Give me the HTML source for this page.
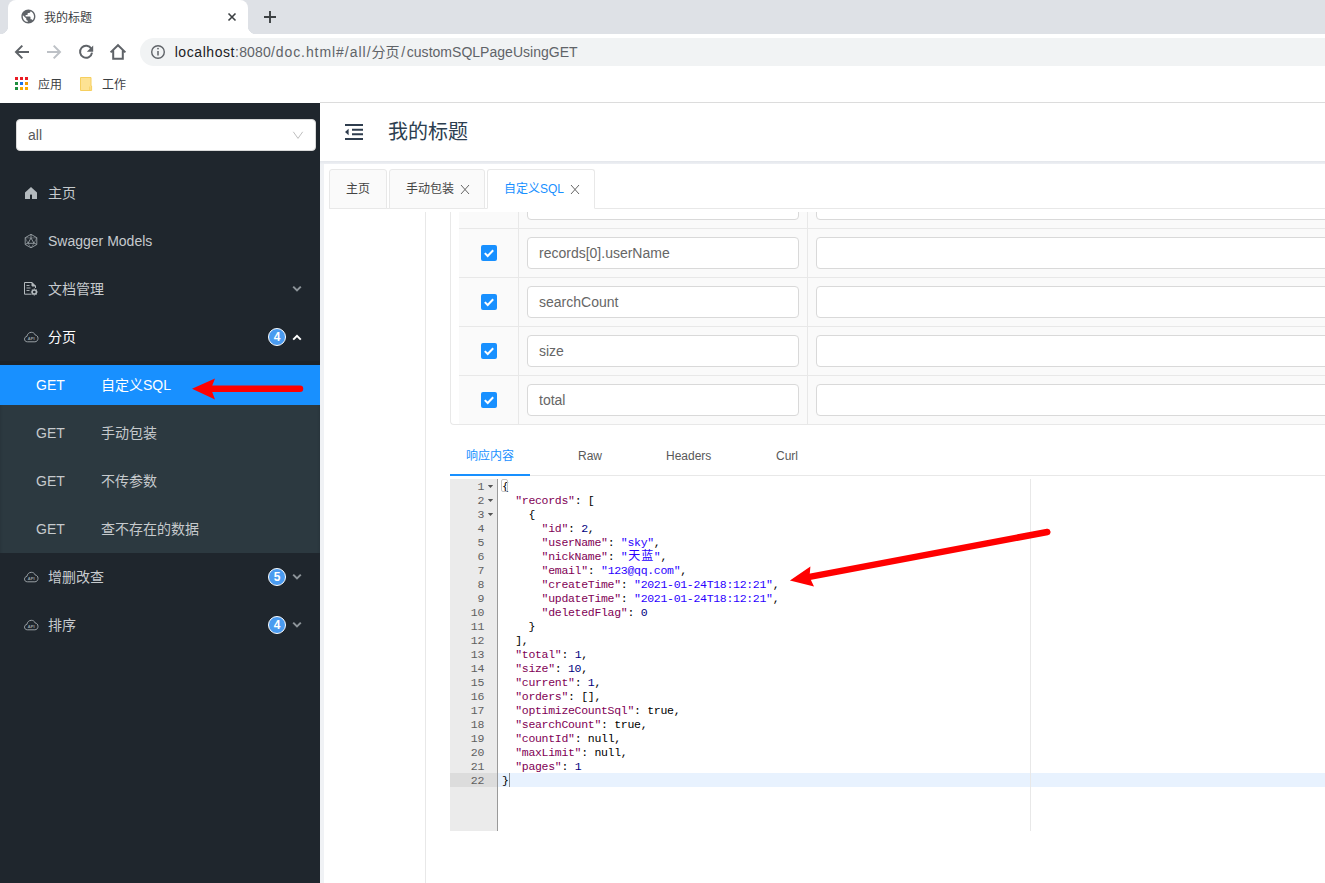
<!DOCTYPE html>
<html lang="zh-CN">
<head>
<meta charset="utf-8">
<title>我的标题</title>
<style>
*{box-sizing:border-box;margin:0;padding:0}
html,body{width:1325px;height:883px;overflow:hidden;background:#fff}
body{position:relative;font-family:"Liberation Sans","Noto Sans CJK SC",sans-serif;color:#333}
.abs{position:absolute}
svg{position:absolute;overflow:visible}
/* ---------- browser chrome ---------- */
#tabstrip{left:0;top:0;width:1325px;height:34px;background:#dee1e6}
#tab{left:8px;top:0;width:240px;height:34px;background:#fff;border-radius:8px 8px 0 0}
#tab:before,#tab:after{content:"";position:absolute;bottom:0;width:8px;height:8px;background:radial-gradient(circle at 0 0,transparent 8px,#fff 8.5px)}
#tab:before{left:-8px}
#tab:after{right:-8px;transform:scaleX(-1)}
#tabtitle{left:44px;top:11px;font-size:12px;line-height:14px;color:#3c4043;white-space:nowrap}
#toolbar{left:0;top:34px;width:1325px;height:34px;background:#fff}
#omni{left:140px;top:38px;width:1200px;height:28px;border-radius:14px;background:#f1f3f4}
#url{left:174px;top:44px;font-size:14px;line-height:17px;color:#5f6368;white-space:nowrap;letter-spacing:.4px}
#url b{font-weight:400;color:#202124}
#bookbar{left:0;top:68px;width:1325px;height:35px;background:#fff}
.bm{font-size:12px;line-height:14px;color:#3c4043;white-space:nowrap}
/* ---------- sidebar ---------- */
#side{left:0;top:103px;width:320px;height:780px;background:#1f262d}
#sel{left:16px;top:119px;width:300px;height:32px;background:#fff;border-radius:4px;border:1px solid #d9d9d9}
#sel span{position:absolute;left:11px;top:7px;font-size:14px;line-height:16px;color:#595959}
.mi{left:48px;font-size:14px;line-height:16px;color:#c6cacd;white-space:nowrap}
.mi.on{color:#fff}
#sub{left:0;top:361px;width:320px;height:192px;background:#2c3940;box-shadow:inset 0 4px 4px -2px rgba(0,0,0,.45)}
#subtop{left:0;top:361px;width:320px;height:4px;background:#1c2228}
#act{left:0;top:365px;width:320px;height:40px;background:#1890ff}
.get{left:36px;font-size:14px;line-height:16px;color:#c6cacd}
.sn{left:101px;font-size:14px;line-height:16px;color:#c6cacd;white-space:nowrap}
.badge{width:18px;height:18px;border-radius:9px;background:#4a9bf0;border:1px solid #fff;color:#fff;font-size:12px;font-weight:700;line-height:16px;text-align:center;left:268px}
/* ---------- main ---------- */
#mainbg{left:320px;top:103px;width:1005px;height:780px;background:#f0f2f5}
#hdr{left:320px;top:103px;width:1005px;height:58px;background:#fff}
#band{left:320px;top:161px;width:1005px;height:3px;background:linear-gradient(#e3e6eb,#eef0f4)}
#card{left:324px;top:164px;width:1001px;height:719px;background:#fff}
#ttl{left:388px;top:120px;font-size:20px;line-height:24px;color:#2c3e50;white-space:nowrap}
.tb{top:169px;height:40px;border:1px solid #e8e8e8;border-radius:3px 3px 0 0;background:#fafafa;font-size:12px;line-height:38px;color:#444;white-space:nowrap}
.tb span{position:absolute;top:0}
#tbline{left:329px;top:208px;width:996px;height:1px;background:#e8e8e8}
/* table */
#tbl{left:450px;top:212px;width:875px;height:213px;background:#fff;border-left:1px solid #e8e8e8;border-bottom:1px solid #e8e8e8;border-radius:0 0 0 4px}
#tbg{left:459px;top:212px;width:866px;height:212px;background:#fafafa}
#vline{left:425px;top:212px;width:1px;height:671px;background:#e8e8e8}
.hl{left:459px;width:866px;height:1px;background:#e8e8e8}
.vl{width:1px;top:212px;height:212px;background:#e8e8e8}
.inp{height:32px;background:#fff;border:1px solid #d9d9d9;border-radius:4px;font-size:14px;line-height:30px;color:#666;padding-left:11px;white-space:nowrap}
.cb{left:481px;width:16px;height:16px;background:#1890ff;border-radius:2px}
/* response tabs */
.rt{top:449px;font-size:12px;line-height:14px;color:#595959;white-space:nowrap}
/* code */
#gut{left:450px;top:479px;width:47px;height:352px;background:#ebebeb}
#gutb{left:497px;top:479px;width:1px;height:352px;background:#9a9a9a}
#code{left:450px;top:479.5px;width:875px;font-family:"Liberation Mono","Noto Sans CJK SC",monospace;font-size:11.5px;letter-spacing:-.3px;line-height:14px;color:#000}
.ln{position:relative;height:14px;white-space:pre}
.ln i{position:absolute;left:0;top:0;width:34px;text-align:right;font-style:normal;color:#606060}
.ln u{position:absolute;left:52px;top:0;text-decoration:none}
.k{color:#7f0055}.s{color:#2a00ff}.n{color:#000080}
.cj{display:inline-block;width:13.2px;text-align:center;font-size:12px;line-height:14px;vertical-align:top}
.ln b{position:absolute;left:37.8px;top:5.5px;width:5.4px;height:3px;background:#555;clip-path:polygon(0 0,100% 0,50% 100%)}
</style>
</head>
<body>
<!-- browser chrome -->
<div class="abs" id="tabstrip"></div>
<div class="abs" id="tab"></div>
<div class="abs" id="tabtitle">我的标题</div>
<div class="abs" id="toolbar"></div>
<div class="abs" id="omni"></div>
<div class="abs" id="url" style="left:0"><span class="abs" style="left:174.7px;top:0;letter-spacing:0.57px;color:#202124">localhost</span><span class="abs" style="left:235.1px;top:0;letter-spacing:0.17px">:8080</span><span class="abs" style="left:271px;top:0;letter-spacing:0.91px">/doc.html</span><span class="abs" style="left:336px;top:0;letter-spacing:0.99px">#/all/</span><span class="abs" style="left:371.5px;top:0;letter-spacing:0px">分页</span><span class="abs" style="left:401.2px;top:0;letter-spacing:0px">/</span><span class="abs" style="left:406.8px;top:0;letter-spacing:0.02px">customSQLPageUsingGET</span></div>
<div class="abs" id="bookbar"></div>
<div class="abs bm" style="left:38px;top:78px">应用</div>
<div class="abs bm" style="left:102px;top:78px">工作</div>

<svg style="left:19.6px;top:8.4px" width="16.8" height="16.8" viewBox="0 0 24 24"><path fill="#5f6368" d="M12 2C6.48 2 2 6.48 2 12s4.48 10 10 10 10-4.48 10-10S17.52 2 12 2zm-1 17.93c-3.95-.49-7-3.85-7-7.93 0-.62.08-1.21.21-1.79L9 15v1c0 1.1.9 2 2 2v1.93zm6.9-2.54c-.26-.81-1-1.39-1.9-1.39h-1v-3c0-.55-.45-1-1-1H8v-2h2c.55 0 1-.45 1-1V7h2c1.1 0 2-.9 2-2v-.41c2.93 1.19 5 4.06 5 7.41 0 2.08-.8 3.97-2.1 5.39z"/></svg>
<svg style="left:0;top:0" width="330" height="103" viewBox="0 0 330 103" fill="none">
 <path d="M228.5 13.5 L235.5 20.5 M235.5 13.5 L228.5 20.5" stroke="#3c4043" stroke-width="1.6"/>
 <path d="M264 17 H276 M270 11 V23" stroke="#3c4043" stroke-width="1.9"/>
 <path d="M29 52 H16.5 M22.3 45.6 L16 52 L22.3 58.4" stroke="#5f6368" stroke-width="2"/>
 <path d="M47 52 H59.5 M53.7 45.6 L60 52 L53.7 58.4" stroke="#bdc1c6" stroke-width="2"/>
 <path d="M91.3 48.8 A6 6 0 1 0 92 52.6" stroke="#5f6368" stroke-width="2"/>
 <path d="M93.2 45.4 V51.8 H86.8 Z" fill="#5f6368"/>
 <path d="M110.6 52.4 L118 45.2 L125.4 52.4 M113.2 50.5 V58.8 H122.8 V50.5" stroke="#5f6368" stroke-width="2"/>
 <circle cx="158" cy="52" r="6.3" stroke="#5f6368" stroke-width="1.4"/>
 <path d="M158 51 V55.6" stroke="#5f6368" stroke-width="1.5"/><circle cx="158" cy="48.6" r="0.9" fill="#5f6368"/>
 <g>
  <rect x="15" y="77" width="3" height="3" fill="#ea1c24"/><rect x="20" y="77" width="3" height="3" fill="#ea1c24"/><rect x="25" y="77" width="3" height="3" fill="#ea1c24"/>
  <rect x="15" y="82" width="3" height="3" fill="#1e8e3e"/><rect x="20" y="82" width="3" height="3" fill="#1a73e8"/><rect x="25" y="82" width="3" height="3" fill="#f29900"/>
  <rect x="15" y="87" width="3" height="3" fill="#1e8e3e"/><rect x="20" y="87" width="3" height="3" fill="#f9ab00"/><rect x="25" y="87" width="3" height="3" fill="#f9ab00"/>
 </g>
 <path d="M80.5 77.5 H91 V86 H91.6 V90.5 H80.5 Z" fill="#fde293" stroke="#f6cf5f" stroke-width="1"/>
 <path d="M89.8 86.5 V90.5" stroke="#f6cf5f" stroke-width="1"/>
</svg>
<div class="abs" style="left:320px;top:102px;width:1005px;height:1px;background:#dcdcdc"></div>


<!-- sidebar -->
<div class="abs" id="side"></div>
<div class="abs" id="sel"><span>all</span></div>
<div class="abs mi" style="top:185px">主页</div>
<div class="abs mi" style="top:233px">Swagger Models</div>
<div class="abs mi" style="top:281px">文档管理</div>
<div class="abs mi on" style="top:329px">分页</div>
<div class="abs" id="sub"></div>
<div class="abs" id="subtop"></div>
<div class="abs" id="act"></div>
<div class="abs get" style="top:377px;color:#fff">GET</div><div class="abs sn" style="top:377px;color:#fff">自定义SQL</div>
<div class="abs get" style="top:425px">GET</div><div class="abs sn" style="top:425px">手动包装</div>
<div class="abs get" style="top:473px">GET</div><div class="abs sn" style="top:473px">不传参数</div>
<div class="abs get" style="top:521px">GET</div><div class="abs sn" style="top:521px">查不存在的数据</div>
<div class="abs mi" style="top:569px">增删改查</div>
<div class="abs mi" style="top:617px">排序</div>
<div class="abs badge" style="top:328px">4</div>
<div class="abs badge" style="top:568px">5</div>
<div class="abs badge" style="top:616px">4</div>

<svg style="left:0;top:103px" width="320" height="780" viewBox="0 103 320 780" fill="none">
 <path d="M297 127.5 l-4.5 8 M297 127.5 l0 0" stroke="none"/>
 <path d="M293.3 131.8 L298 138.4 L302.7 131.8" stroke="#bfbfbf" stroke-width="1"/>
 <!-- home -->
 <path d="M31 187 L37 192.6 V199 H25 V192.6 Z" fill="#b4babe"/>
 <rect x="30" y="194.6" width="2" height="4.4" fill="#1f262d"/>
 <!-- swagger models -->
 <g stroke="#9aa1a6" stroke-width="0.9">
  <path d="M31 234.3 L36.8 237.7 V244.5 L31 247.8 L25.2 244.5 V237.7 Z"/>
  <path d="M31 234.3 V238 M25.2 244.5 L28.4 242.7 M36.8 244.5 L33.6 242.7"/>
  <path d="M31 238 L34 243.3 H28 Z"/>
  <path d="M25.2 237.7 L31 238 L36.8 237.7 M25.2 237.7 L28 243.3 L31 247.8 L34 243.3 L36.8 237.7" stroke-width="0.5"/>
 </g>
 <!-- doc manage -->
 <g stroke="#b4babe" stroke-width="1">
  <path d="M31.5 294.2 H24.5 V282.5 H32 L35.5 286 V288"/>
  <path d="M32 282.5 V286 H35.5" fill="#b4babe"/>
  <path d="M26.5 285.5 H29.5 M26.5 288 H30.5 M26.5 290.5 H29.5" stroke-width="0.9"/>
  <circle cx="34.3" cy="292" r="2.1" stroke-width="1.5"/>
  <path d="M34.3 288.6 V289.6 M34.3 294.4 V295.4 M30.9 292 H31.9 M36.7 292 H37.7 M31.9 289.6 L32.6 290.3 M36 293.7 L36.7 294.4 M31.9 294.4 L32.6 293.7 M36 290.3 L36.7 289.6" stroke-width="1.1"/>
 </g>
 <g transform="translate(24,331.5)" stroke="#9aa1a6" stroke-width="1" fill="none"><path d="M3.4 10.3 C1.4 10.3 0.5 8.9 0.5 7.6 C0.5 6.2 1.5 5.1 2.9 4.9 C3.2 2.6 5 0.8 7.3 0.8 C9.2 0.8 10.7 1.9 11.3 3.6 C12.8 3.7 14 4.9 14 6.9 C14 8.8 12.7 10.3 10.9 10.3 Z"/><text x="7.2" y="8" font-size="4" font-weight="700" text-anchor="middle" fill="#9aa1a6" stroke="none" font-family="Liberation Sans, sans-serif">API</text></g><g transform="translate(24,571.5)" stroke="#9aa1a6" stroke-width="1" fill="none"><path d="M3.4 10.3 C1.4 10.3 0.5 8.9 0.5 7.6 C0.5 6.2 1.5 5.1 2.9 4.9 C3.2 2.6 5 0.8 7.3 0.8 C9.2 0.8 10.7 1.9 11.3 3.6 C12.8 3.7 14 4.9 14 6.9 C14 8.8 12.7 10.3 10.9 10.3 Z"/><text x="7.2" y="8" font-size="4" font-weight="700" text-anchor="middle" fill="#9aa1a6" stroke="none" font-family="Liberation Sans, sans-serif">API</text></g><g transform="translate(24,619.5)" stroke="#9aa1a6" stroke-width="1" fill="none"><path d="M3.4 10.3 C1.4 10.3 0.5 8.9 0.5 7.6 C0.5 6.2 1.5 5.1 2.9 4.9 C3.2 2.6 5 0.8 7.3 0.8 C9.2 0.8 10.7 1.9 11.3 3.6 C12.8 3.7 14 4.9 14 6.9 C14 8.8 12.7 10.3 10.9 10.3 Z"/><text x="7.2" y="8" font-size="4" font-weight="700" text-anchor="middle" fill="#9aa1a6" stroke="none" font-family="Liberation Sans, sans-serif">API</text></g>
 <!-- chevrons -->
 <path d="M293.2 286.6 L297 290.4 L300.8 286.6" stroke="#8d9499" stroke-width="2"/>
 <path d="M293.2 339.6 L297 335.8 L300.8 339.6" stroke="#fff" stroke-width="2"/>
 <path d="M293.2 574.6 L297 578.4 L300.8 574.6" stroke="#8d9499" stroke-width="2"/>
 <path d="M293.2 622.6 L297 626.4 L300.8 622.6" stroke="#8d9499" stroke-width="2"/>
</svg>


<!-- main -->
<div class="abs" id="mainbg"></div>
<div class="abs" id="hdr"></div>
<div class="abs" id="band"></div>
<div class="abs" id="card"></div>
<div class="abs" id="ttl">我的标题</div>
<div class="abs" id="tbline"></div>
<div class="abs tb" style="left:329px;width:58px"><span style="left:16px">主页</span></div>
<div class="abs tb" style="left:389px;width:96px"><span style="left:16px">手动包装</span></div>
<div class="abs tb" style="left:487px;width:108px;background:#fff;border-bottom-color:#fff;color:#1890ff"><span style="left:16px">自定义SQL</span></div>

<svg style="left:320px;top:103px" width="300" height="110" viewBox="320 103 300 110" fill="none">
 <path d="M345 125 H363 M352 129.7 H363 M352 134.3 H363 M345 139 H363" stroke="#2f3d4e" stroke-width="2"/>
 <path d="M348.6 128.8 V135.2 L345 132 Z" fill="#2f3d4e"/>
 <path d="M461 185 L469 194 M469 185 L461 194" stroke="#666" stroke-width="1"/>
 <path d="M571 185 L579 194 M579 185 L571 194" stroke="#666" stroke-width="1"/>
</svg>


<!-- table -->
<div class="abs" id="vline"></div>
<div class="abs" id="tbl"></div>
<div class="abs" id="tbg"></div>
<div class="abs" style="left:451px;top:212px;width:874px;height:213px;overflow:hidden">
<div class="abs inp" style="left:76px;top:-24px;width:272px"></div>
<div class="abs inp" style="left:365px;top:-24px;width:600px"></div>
</div>
<div class="abs hl" style="top:228px"></div>
<div class="abs cb" style="top:245px"><svg width="16" height="16" viewBox="0 0 16 16" style="left:0;top:0"><path d="M3.8 8.1 L6.7 11 L12.2 5.2" fill="none" stroke="#fff" stroke-width="2"/></svg></div>
<div class="abs inp" style="left:527px;top:237px;width:272px">records[0].userName</div>
<div class="abs inp" style="left:816px;top:237px;width:600px"></div>
<div class="abs hl" style="top:277px"></div>
<div class="abs cb" style="top:294px"><svg width="16" height="16" viewBox="0 0 16 16" style="left:0;top:0"><path d="M3.8 8.1 L6.7 11 L12.2 5.2" fill="none" stroke="#fff" stroke-width="2"/></svg></div>
<div class="abs inp" style="left:527px;top:286px;width:272px">searchCount</div>
<div class="abs inp" style="left:816px;top:286px;width:600px"></div>
<div class="abs hl" style="top:326px"></div>
<div class="abs cb" style="top:343px"><svg width="16" height="16" viewBox="0 0 16 16" style="left:0;top:0"><path d="M3.8 8.1 L6.7 11 L12.2 5.2" fill="none" stroke="#fff" stroke-width="2"/></svg></div>
<div class="abs inp" style="left:527px;top:335px;width:272px">size</div>
<div class="abs inp" style="left:816px;top:335px;width:600px"></div>
<div class="abs hl" style="top:375px"></div>
<div class="abs cb" style="top:392px"><svg width="16" height="16" viewBox="0 0 16 16" style="left:0;top:0"><path d="M3.8 8.1 L6.7 11 L12.2 5.2" fill="none" stroke="#fff" stroke-width="2"/></svg></div>
<div class="abs inp" style="left:527px;top:384px;width:272px">total</div>
<div class="abs inp" style="left:816px;top:384px;width:600px"></div>
<div class="abs vl" style="left:518px"></div>
<div class="abs vl" style="left:807px"></div>

<!-- response tabs -->
<div class="abs rt" style="left:466px;color:#1890ff">响应内容</div>
<div class="abs rt" style="left:578px">Raw</div>
<div class="abs rt" style="left:666px">Headers</div>
<div class="abs rt" style="left:776px">Curl</div>
<div class="abs" style="left:450px;top:475px;width:875px;height:1px;background:#e8e8e8"></div>
<div class="abs" style="left:450px;top:474px;width:80px;height:2px;background:#1890ff"></div>

<!-- code -->
<div class="abs" id="gut"></div>
<div class="abs" id="gutb"></div>
<div class="abs" style="left:450px;top:773px;width:47px;height:14px;background:#dcdcdc"></div>
<div class="abs" style="left:498px;top:773px;width:827px;height:14px;background:#e8f2fe"></div>
<div class="abs" style="left:1030px;top:479px;width:1px;height:352px;background:#e8e8e8"></div>
<div class="abs" id="code">
<div class="ln"><i>1</i><b></b><u>{</u></div>
<div class="ln"><i>2</i><b></b><u>  <span class="k">&quot;records&quot;</span>: [</u></div>
<div class="ln"><i>3</i><b></b><u>    {</u></div>
<div class="ln"><i>4</i><u>      <span class="k">&quot;id&quot;</span>: <span class="n">2</span>,</u></div>
<div class="ln"><i>5</i><u>      <span class="k">&quot;userName&quot;</span>: <span class="s">&quot;sky&quot;</span>,</u></div>
<div class="ln"><i>6</i><u>      <span class="k">&quot;nickName&quot;</span>: <span class="s">"<span class="cj">天</span><span class="cj">蓝</span>"</span>,</u></div>
<div class="ln"><i>7</i><u>      <span class="k">&quot;email&quot;</span>: <span class="s">&quot;123@qq.com&quot;</span>,</u></div>
<div class="ln"><i>8</i><u>      <span class="k">&quot;createTime&quot;</span>: <span class="s">&quot;2021-01-24T18:12:21&quot;</span>,</u></div>
<div class="ln"><i>9</i><u>      <span class="k">&quot;updateTime&quot;</span>: <span class="s">&quot;2021-01-24T18:12:21&quot;</span>,</u></div>
<div class="ln"><i>10</i><u>      <span class="k">&quot;deletedFlag&quot;</span>: <span class="n">0</span></u></div>
<div class="ln"><i>11</i><u>    }</u></div>
<div class="ln"><i>12</i><u>  ],</u></div>
<div class="ln"><i>13</i><u>  <span class="k">&quot;total&quot;</span>: <span class="n">1</span>,</u></div>
<div class="ln"><i>14</i><u>  <span class="k">&quot;size&quot;</span>: <span class="n">10</span>,</u></div>
<div class="ln"><i>15</i><u>  <span class="k">&quot;current&quot;</span>: <span class="n">1</span>,</u></div>
<div class="ln"><i>16</i><u>  <span class="k">&quot;orders&quot;</span>: [],</u></div>
<div class="ln"><i>17</i><u>  <span class="k">&quot;optimizeCountSql&quot;</span>: true,</u></div>
<div class="ln"><i>18</i><u>  <span class="k">&quot;searchCount&quot;</span>: true,</u></div>
<div class="ln"><i>19</i><u>  <span class="k">&quot;countId&quot;</span>: null,</u></div>
<div class="ln"><i>20</i><u>  <span class="k">&quot;maxLimit&quot;</span>: null,</u></div>
<div class="ln"><i>21</i><u>  <span class="k">&quot;pages&quot;</span>: <span class="n">1</span></u></div>
<div class="ln"><i>22</i><u>}</u></div>
</div>


<svg style="left:0;top:0" width="1325" height="883" viewBox="0 0 1325 883">
 <path d="M212 388.7 H300" stroke="#ff0000" stroke-width="6.5" stroke-linecap="round" fill="none"/>
 <path d="M192 388.7 L215 378.4 L211 388.7 L215 399.4 Z" fill="#ff0000"/>
 <path d="M809.5 576.9 L1047.3 532" stroke="#ff0000" stroke-width="6.5" stroke-linecap="round" fill="none"/>
 <path d="M789.9 580.6 L810.4 566.4 L809.5 576.9 L814 586.6 Z" fill="#ff0000"/>
</svg>

<div class="abs" style="left:501px;top:479px;width:7px;height:13px;border:1px solid #c4c4c4;border-radius:2px"></div>
<div class="abs" style="left:509px;top:773px;width:1px;height:14px;background:#8a8a8a"></div>
</body>
</html>
